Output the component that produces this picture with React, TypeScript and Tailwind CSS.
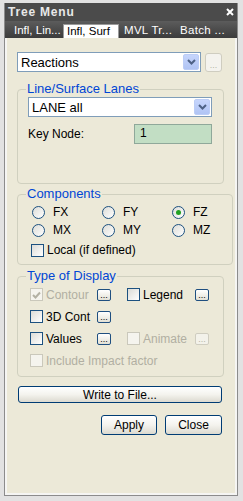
import React from 'react';

const font = { fontFamily: '"Liberation Sans", Arial, sans-serif' };

const Chevron = () => (
    <svg width="9" height="6" viewBox="0 0 9 6">
        <path d="M1 1 L4.5 4.5 L8 1" stroke="#4d6185" strokeWidth="2" fill="none" />
    </svg>
);

const Select = ({ value, className }: { value: string; className: string }) => (
    <div className={`flex items-center bg-white border border-[#7f9db9] ${className}`}>
        <span className="flex-1 pl-[3px] text-[13px] leading-none text-black">{value}</span>
        <div className="w-[16px] h-[16px] mr-[1px] flex items-center justify-center rounded-[2px] bg-gradient-to-b from-[#c6d5fc] to-[#b0c4f4] border border-[#bccdf6]">
            <Chevron />
        </div>
    </div>
);

const Dots = ({ disabled }: { disabled?: boolean }) => (
    <div
        className={`w-[14px] h-[12px] rounded-[2px] border flex items-end justify-center text-[9px] leading-[9px] ${
            disabled ? 'border-[#cfcdc0] bg-[#f3f2ea] text-[#b5b3a6]' : 'border-[#1f4f80] bg-gradient-to-b from-white to-[#e3e1d5] text-black'
        }`}
    >
        ...
    </div>
);

const Check = ({ disabled, checked }: { disabled?: boolean; checked?: boolean }) => (
    <div
        className={`w-[13px] h-[13px] shrink-0 border flex items-center justify-center ${
            disabled ? 'border-[#cac8bb] bg-[#f5f4ee]' : 'border-[#1c5180] bg-gradient-to-br from-[#dcdcd7] to-white'
        }`}
    >
        {checked && (
            <svg width="9" height="8" viewBox="0 0 9 8">
                <path d="M1 4 L3.5 6.5 L8 1.5" stroke="#b3b1a4" strokeWidth="2" fill="none" />
            </svg>
        )}
    </div>
);

const Radio = ({ checked }: { checked?: boolean }) => (
    <div className="w-[13px] h-[13px] shrink-0 rounded-full border border-[#1c5180] bg-gradient-to-br from-[#dcdcd7] to-white flex items-center justify-center">
        {checked && <div className="w-[5px] h-[5px] rounded-full bg-[#21a121]" />}
    </div>
);

const Group = ({ title, className, inner, children }: { title: string; className: string; inner: string; children: React.ReactNode }) => (
    <fieldset className={`border border-[#d0d0bf] rounded-[4px] w-[207px] ${className}`}>
        <legend className="ml-[8px] px-[1px] text-[13px] leading-[14px] text-[#0046d5]">{title}</legend>
        <div className={inner}>{children}</div>
    </fieldset>
);

const XpButton = ({ label, className }: { label: string; className: string }) => (
    <div
        className={`flex items-center justify-center rounded-[3px] border border-[#003c74] bg-gradient-to-b from-white via-[#f4f3ee] to-[#dcdad0] text-[12px] text-black ${className}`}
    >
        {label}
    </div>
);

export default function App() {
    return (
        <div style={font} className="w-[243px] h-[501px] bg-[#e2e2e2] pt-[3px] pl-[4px] pr-[5px] pb-[5px]">
            <div className="h-full flex flex-col border border-[#8c8c8c] border-t-0">
                {/* Title bar */}
                <div className="h-[18px] shrink-0 bg-[#4b4b4b] flex items-center justify-between pl-[3px] pr-[3px]">
                    <span className="text-[12px] font-bold tracking-[0.8px] text-[#e8e8e8]">Tree Menu</span>
                    <svg width="8" height="8" viewBox="0 0 8 8">
                        <path d="M1 1 L7 7 M7 1 L1 7" stroke="#ffffff" strokeWidth="2" />
                    </svg>
                </div>

                {/* Tabs */}
                <div className="h-[17px] shrink-0 bg-gradient-to-b from-[#5c5c5c] to-[#3c3c3c] flex items-end pl-[5px] text-[11.5px] leading-none">
                    <div className="w-[53px] h-[14px] pl-[4px] text-white flex items-center">Infl, Lin...</div>
                    <div className="w-[56px] h-[14px] pl-[3px] bg-white text-black border border-[#9a9a9a] border-b-0 flex items-center">Infl, Surf</div>
                    <div className="w-[56px] h-[14px] pl-[5px] text-white flex items-center tracking-[0.3px]">MVL Tr...</div>
                    <div className="w-[50px] h-[14px] pl-[5px] text-white flex items-center tracking-[0.3px]">Batch ...</div>
                </div>

                {/* Content */}
                <div className="flex-1 bg-[#ece9d8] border-[2px] border-t-0 border-[#f5f5f3] pl-[10px] pt-[14px] text-[12px] text-black">
                    <div className="flex items-center gap-[4px]">
                        <Select value="Reactions" className="w-[184px] h-[20px]" />
                        <div className="w-[17px] h-[19px] rounded-[3px] border border-[#cfcdc0] bg-[#f4f3ee] flex items-end justify-center text-[9px] leading-[11px] text-[#b5b3a6]">
                            ...
                        </div>
                    </div>

                    <Group title="Line/Surface Lanes" className="mt-[10px] h-[102px]" inner="pl-[10px]">
                        <Select value="LANE all" className="w-[184px] h-[20px] mt-[1px]" />
                        <div className="flex items-center mt-[7px]">
                            <span className="w-[106px] text-[12px]">Key Node:</span>
                            <div className="w-[78px] h-[20px] border border-[#8fa89a] bg-[#c2dec4] pl-[5px] text-[12px] leading-[16px]">1</div>
                        </div>
                    </Group>

                    <Group title="Components" className="mt-[3px] h-[78px]" inner="pl-[14px]">
                        <div className="grid grid-cols-[70px_70px_60px] gap-y-[4px] mt-[4px]">
                            {['FX', 'FY', 'FZ', 'MX', 'MY', 'MZ'].map((c) => (
                                <div key={c} className="flex items-center gap-[8px] h-[14px]">
                                    <Radio checked={c === 'FZ'} />
                                    <span className="text-[12px]">{c}</span>
                                </div>
                            ))}
                        </div>
                        <div className="flex items-center gap-[3px] mt-[4px] -ml-[1px]">
                            <Check />
                            <span className="text-[12px]">Local (if defined)</span>
                        </div>
                    </Group>

                    <Group title="Type of Display" className="mt-[4px] h-[108px]" inner="pl-[12px]">
                        <div className="flex flex-col gap-[9px] mt-[5px]">
                            <div className="flex items-center h-[13px]">
                                <div className="flex items-center gap-[3px] w-[67px]">
                                    <Check disabled checked />
                                    <span className="text-[#b1afa2]">Contour</span>
                                </div>
                                <div className="w-[30px]"><Dots /></div>
                                <div className="flex items-center gap-[3px] w-[68px]">
                                    <Check />
                                    <span>Legend</span>
                                </div>
                                <Dots />
                            </div>
                            <div className="flex items-center h-[13px]">
                                <div className="flex items-center gap-[3px] w-[67px]">
                                    <Check />
                                    <span>3D Cont</span>
                                </div>
                                <Dots />
                            </div>
                            <div className="flex items-center h-[13px]">
                                <div className="flex items-center gap-[3px] w-[67px]">
                                    <Check />
                                    <span>Values</span>
                                </div>
                                <div className="w-[30px]"><Dots /></div>
                                <div className="flex items-center gap-[3px] w-[68px]">
                                    <Check disabled />
                                    <span className="text-[#b1afa2]">Animate</span>
                                </div>
                                <Dots disabled />
                            </div>
                            <div className="flex items-center h-[13px] gap-[3px]">
                                <Check disabled />
                                <span className="text-[#b1afa2]">Include Impact factor</span>
                            </div>
                        </div>
                    </Group>

                    <XpButton label="Write to File..." className="w-[204px] h-[17px] mt-[9px] ml-[1px]" />
                    <div className="flex gap-[8px] mt-[12px] ml-[84px]">
                        <XpButton label="Apply" className="w-[56px] h-[20px]" />
                        <XpButton label="Close" className="w-[57px] h-[20px]" />
                    </div>
                </div>
            </div>
        </div>
    );
}
